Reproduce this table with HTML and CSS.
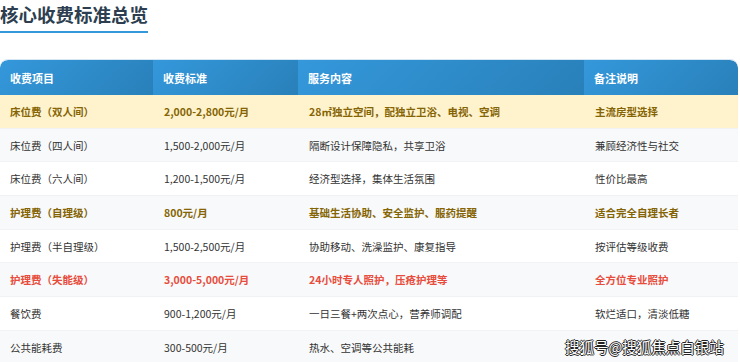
FILE: index.html
```html
<!DOCTYPE html>
<html lang="zh-CN">
	<head>
		<meta charset="utf-8">
		<title>核心收费标准总览</title>
		<link rel="stylesheet" href="styles.css">
	</head>
	<body>
		<div class="page">
			<h2 class="title">核心收费标准总览</h2>
			<table class="fees">
				<thead>
					<tr>
						<th class="c1">收费项目</th>
						<th class="c2">收费标准</th>
						<th class="c3">服务内容</th>
						<th class="c4">备注说明</th>
					</tr>
				</thead>
				<tbody>
					<tr class="gold">
						<td>床位费（双人间）</td>
						<td>2,000-2,800元/月</td>
						<td>28㎡独立空间，配独立卫浴、电视、空调</td>
						<td>主流房型选择</td>
					</tr>
					<tr>
						<td>床位费（四人间）</td>
						<td>1,500-2,000元/月</td>
						<td>隔断设计保障隐私，共享卫浴</td>
						<td>兼顾经济性与社交</td>
					</tr>
					<tr>
						<td>床位费（六人间）</td>
						<td>1,200-1,500元/月</td>
						<td>经济型选择，集体生活氛围</td>
						<td>性价比最高</td>
					</tr>
					<tr class="gold">
						<td>护理费（自理级）</td>
						<td>800元/月</td>
						<td>基础生活协助、安全监护、服药提醒</td>
						<td>适合完全自理长者</td>
					</tr>
					<tr>
						<td>护理费（半自理级）</td>
						<td>1,500-2,500元/月</td>
						<td>协助移动、洗澡监护、康复指导</td>
						<td>按评估等级收费</td>
					</tr>
					<tr class="alert">
						<td>护理费（失能级）</td>
						<td>3,000-5,000元/月</td>
						<td>24小时专人照护，压疮护理等</td>
						<td>全方位专业照护</td>
					</tr>
					<tr>
						<td>餐饮费</td>
						<td>900-1,200元/月</td>
						<td>一日三餐+两次点心，营养师调配</td>
						<td>软烂适口，清淡低糖</td>
					</tr>
					<tr>
						<td>公共能耗费</td>
						<td>300-500元/月</td>
						<td>热水、空调等公共能耗</td>
						<td></td>
					</tr>
				</tbody>
			</table>
			<div class="mark">搜狐号@搜狐焦点白银站</div>
		</div>
	</body>
</html>
```

FILE: styles.css
```css
body {
	margin: 0;
	font-family: "Noto Sans CJK SC", "Noto Sans", sans-serif;
	background: #fff;
	color: #333;
}

.page {
	position: relative;
	width: 740px;
	height: 362px;
	overflow: hidden;
}

.title {
	display: inline-block;
	margin: 0;
	padding: 1px 0 4px 0;
	font-size: 18.5px;
	line-height: 26px;
	font-weight: bold;
	color: #2c3e50;
	border-bottom: 2px solid #3498db;
}

.fees {
	margin-top: 26px;
	width: 738px;
	border-collapse: separate;
	border-spacing: 0;
	table-layout: fixed;
	font-size: 10.5px;
	border-top: 1px solid #d6e6f2;
	border-radius: 8px 8px 0 0;
	overflow: hidden;
}

.fees th {
	height: 35px;
	padding: 0 0 0 10px;
	text-align: left;
	font-size: 11px;
	font-weight: bold;
	color: #fff;
	background: linear-gradient(135deg, #3498db, #2980b9);
}

.fees th.c1 { width: 143px; border-top-left-radius: 8px; }
.fees th.c2 { width: 135px; }
.fees th.c3 { width: 276px; }
.fees th.c4 { border-top-right-radius: 8px; }

.fees td {
	height: 32.7px;
	padding: 0 0 0 11px;
	border-bottom: 1px solid #f0f2f4;
	white-space: nowrap;
}

.fees td:first-child {
	padding-left: 10px;
}

.fees tbody tr:nth-child(even) td {
	background: #f8f9fa;
}

.fees tr.gold td {
	background: #fff3cd;
	color: #856404;
	font-weight: bold;
}

.fees tr.alert td {
	color: #e74c3c;
	font-weight: bold;
}

.mark {
	position: absolute;
	left: 565px;
	top: 338px;
	font-size: 14.5px;
	line-height: 18px;
	color: #fff;
	text-shadow: -1px 0 #222, 1px 0 #222, 0 -1px #222, 0 1px #222;
}
```
